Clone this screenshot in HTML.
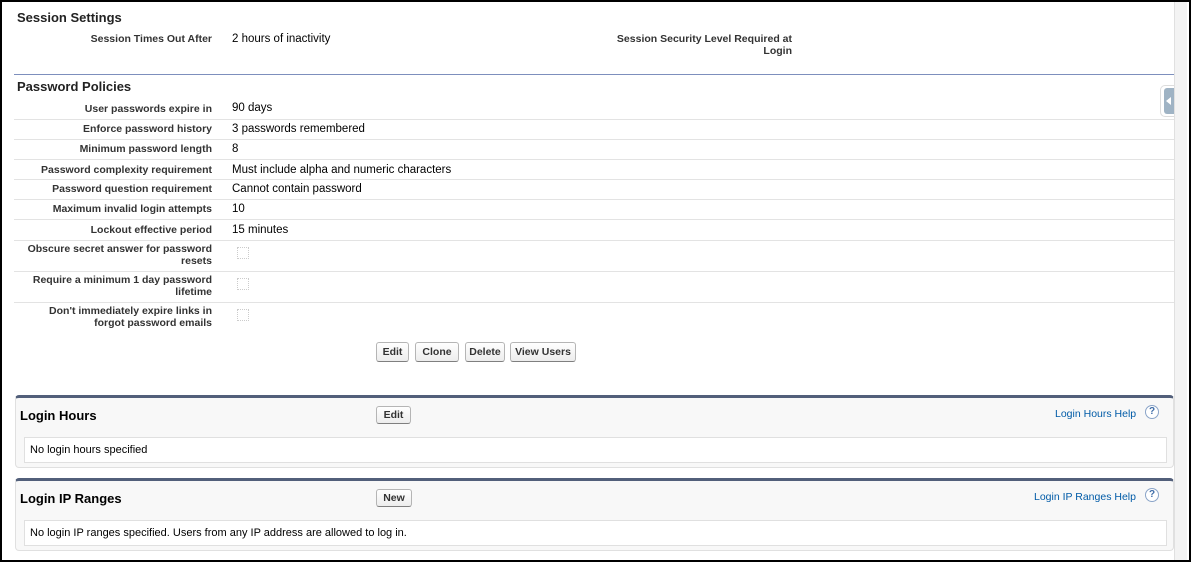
<!DOCTYPE html>
<html><head><meta charset="utf-8"><style>
*{margin:0;padding:0;box-sizing:border-box}
body{width:1191px;height:562px;position:relative;background:#fff;font-family:"Liberation Sans",Arial,sans-serif;color:#000;overflow:hidden}
.a{position:absolute;white-space:nowrap}
.h{font-weight:bold;font-size:13px;color:#222}
.l{font-weight:bold;font-size:10.5px;color:#333;text-align:right;width:200px;left:12px;line-height:12px}
.v{font-size:11.5px;left:232px;color:#000}
.sep{position:absolute;left:14px;width:1160px;height:1px;background:#e3e3e3}
.btn{position:absolute;height:20px;border:1px solid #b5b5b5;border-bottom-color:#7f7f7f;border-radius:3px;background:linear-gradient(#fff,#ededed);font-weight:bold;font-size:10.5px;color:#333;text-align:center;line-height:18px}
.cb{position:absolute;left:237px;width:12px;height:12px;border:1px dotted #ccc}
.panel{position:absolute;left:15px;width:1159px;background:#f8f8f8;border:1px solid #e0e0e0;border-top:3px solid #525f7a;border-radius:4px}
.inner{position:absolute;left:8px;right:6px;height:26px;background:#fff;border:1px solid #e0e0e0;font-size:11px;padding-left:5px;line-height:24px}
.ph{position:absolute;left:4px;font-weight:bold;font-size:13px;color:#000}
.lk{position:absolute;font-size:10.5px;color:#015ba7}
.q{position:absolute;width:14px;height:14px;border-radius:50%;border:1px solid #8aa4c8;color:#3f6da8;font-size:10px;font-weight:bold;text-align:center;line-height:12px;background:#fff}
</style></head><body>
<div style="position:absolute;inset:0;border:2px solid #000;z-index:10;pointer-events:none"></div>
<div style="position:absolute;left:1174px;top:0;width:13px;height:562px;background:#f3f3f3;border-left:1px solid #e0e0e0"></div>
<div style="position:absolute;left:1160px;top:85px;width:14px;height:32px;border:1px solid #ddd;border-right:none;border-radius:5px 0 0 5px;background:#fff"></div>
<div style="position:absolute;left:1164px;top:88px;width:10px;height:26px;background:#9fb3c4;border-radius:3px 0 0 3px"></div>
<div style="position:absolute;left:1166px;top:97px;width:0;height:0;border-top:4px solid transparent;border-bottom:4px solid transparent;border-right:5px solid #fff"></div>

<div class="a h" style="left:17px;top:10px">Session Settings</div>
<div class="a l" style="top:33px">Session Times Out After</div>
<div class="a v" style="top:33px">2 hours of inactivity</div>
<div class="a l" style="top:33px;left:592px;width:200px">Session Security Level Required at<br>Login</div>
<div style="position:absolute;left:14px;top:74px;width:1160px;height:1px;background:#7d8fbd"></div>

<div class="a h" style="left:17px;top:79px">Password Policies</div>
<div class="a l" style="top:103px">User passwords expire in</div><div class="a v" style="top:102px">90 days</div>
<div class="sep" style="top:119px"></div>
<div class="a l" style="top:123px">Enforce password history</div><div class="a v" style="top:123px">3 passwords remembered</div>
<div class="sep" style="top:139px"></div>
<div class="a l" style="top:143px">Minimum password length</div><div class="a v" style="top:143px">8</div>
<div class="sep" style="top:159px"></div>
<div class="a l" style="top:164px">Password complexity requirement</div><div class="a v" style="top:164px">Must include alpha and numeric characters</div>
<div class="sep" style="top:179px"></div>
<div class="a l" style="top:183px">Password question requirement</div><div class="a v" style="top:183px">Cannot contain password</div>
<div class="sep" style="top:199px"></div>
<div class="a l" style="top:203px">Maximum invalid login attempts</div><div class="a v" style="top:203px">10</div>
<div class="sep" style="top:219px"></div>
<div class="a l" style="top:224px">Lockout effective period</div><div class="a v" style="top:224px">15 minutes</div>
<div class="sep" style="top:240px"></div>
<div class="a l" style="top:243px">Obscure secret answer for password<br>resets</div><div class="cb" style="top:247px"></div>
<div class="sep" style="top:271px"></div>
<div class="a l" style="top:274px">Require a minimum 1 day password<br>lifetime</div><div class="cb" style="top:278px"></div>
<div class="sep" style="top:302px"></div>
<div class="a l" style="top:305px">Don't immediately expire links in<br>forgot password emails</div><div class="cb" style="top:309px"></div>

<div class="btn" style="left:376px;top:342px;width:33px">Edit</div>
<div class="btn" style="left:415px;top:342px;width:44px">Clone</div>
<div class="btn" style="left:465px;top:342px;width:40px">Delete</div>
<div class="btn" style="left:510px;top:342px;width:66px">View Users</div>

<div class="panel" style="top:395px;height:73px">
<div class="ph" style="top:10px">Login Hours</div>
<div class="btn" style="left:360px;top:8px;width:35px;height:18px;line-height:16px">Edit</div>
<div class="lk" style="left:1039px;top:10px">Login Hours Help</div>
<div class="q" style="left:1129px;top:7px">?</div>
<div class="inner" style="top:39px">No login hours specified</div>
</div>
<div class="panel" style="top:478px;height:73px">
<div class="ph" style="top:10px">Login IP Ranges</div>
<div class="btn" style="left:360px;top:8px;width:36px;height:18px;line-height:16px">New</div>
<div class="lk" style="left:1018px;top:10px">Login IP Ranges Help</div>
<div class="q" style="left:1129px;top:7px">?</div>
<div class="inner" style="top:39px">No login IP ranges specified. Users from any IP address are allowed to log in.</div>
</div>
</body></html>
